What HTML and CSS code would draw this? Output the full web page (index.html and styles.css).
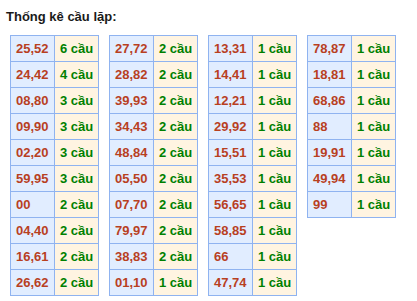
FILE: index.html
```html
<!DOCTYPE html>
<html>
<head>
    <meta charset="utf-8">
    <title>Thống kê cầu lặp</title>
    <link rel="stylesheet" href="styles.css">
</head>
<body>
    <h3 class="title">Thống kê cầu lặp:</h3>
    <div class="tables">
        <table class="cau">
            <tr><td class="so">25,52</td><td class="dem">6 cầu</td></tr>
            <tr><td class="so">24,42</td><td class="dem">4 cầu</td></tr>
            <tr><td class="so">08,80</td><td class="dem">3 cầu</td></tr>
            <tr><td class="so">09,90</td><td class="dem">3 cầu</td></tr>
            <tr><td class="so">02,20</td><td class="dem">3 cầu</td></tr>
            <tr><td class="so">59,95</td><td class="dem">3 cầu</td></tr>
            <tr><td class="so">00</td><td class="dem">2 cầu</td></tr>
            <tr><td class="so">04,40</td><td class="dem">2 cầu</td></tr>
            <tr><td class="so">16,61</td><td class="dem">2 cầu</td></tr>
            <tr><td class="so">26,62</td><td class="dem">2 cầu</td></tr>
        </table>
        <table class="cau">
            <tr><td class="so">27,72</td><td class="dem">2 cầu</td></tr>
            <tr><td class="so">28,82</td><td class="dem">2 cầu</td></tr>
            <tr><td class="so">39,93</td><td class="dem">2 cầu</td></tr>
            <tr><td class="so">34,43</td><td class="dem">2 cầu</td></tr>
            <tr><td class="so">48,84</td><td class="dem">2 cầu</td></tr>
            <tr><td class="so">05,50</td><td class="dem">2 cầu</td></tr>
            <tr><td class="so">07,70</td><td class="dem">2 cầu</td></tr>
            <tr><td class="so">79,97</td><td class="dem">2 cầu</td></tr>
            <tr><td class="so">38,83</td><td class="dem">2 cầu</td></tr>
            <tr><td class="so">01,10</td><td class="dem">1 cầu</td></tr>
        </table>
        <table class="cau">
            <tr><td class="so">13,31</td><td class="dem">1 cầu</td></tr>
            <tr><td class="so">14,41</td><td class="dem">1 cầu</td></tr>
            <tr><td class="so">12,21</td><td class="dem">1 cầu</td></tr>
            <tr><td class="so">29,92</td><td class="dem">1 cầu</td></tr>
            <tr><td class="so">15,51</td><td class="dem">1 cầu</td></tr>
            <tr><td class="so">35,53</td><td class="dem">1 cầu</td></tr>
            <tr><td class="so">56,65</td><td class="dem">1 cầu</td></tr>
            <tr><td class="so">58,85</td><td class="dem">1 cầu</td></tr>
            <tr><td class="so">66</td><td class="dem">1 cầu</td></tr>
            <tr><td class="so">47,74</td><td class="dem">1 cầu</td></tr>
        </table>
        <table class="cau">
            <tr><td class="so">78,87</td><td class="dem">1 cầu</td></tr>
            <tr><td class="so">18,81</td><td class="dem">1 cầu</td></tr>
            <tr><td class="so">68,86</td><td class="dem">1 cầu</td></tr>
            <tr><td class="so">88</td><td class="dem">1 cầu</td></tr>
            <tr><td class="so">19,91</td><td class="dem">1 cầu</td></tr>
            <tr><td class="so">49,94</td><td class="dem">1 cầu</td></tr>
            <tr><td class="so">99</td><td class="dem">1 cầu</td></tr>
        </table>
    </div>
</body>
</html>
```
FILE: styles.css
```css
body { margin: 0; background: #fff; font-family: "Liberation Sans", Arial, sans-serif; }
.title { margin: 0; padding: 9px 0 0 6px; font-size: 13px; line-height: 16px; color: #1a1a1a; font-weight: bold; }
.tables { display: flex; align-items: flex-start; gap: 10px; margin: 10px 0 0 10px; }
.cau { border-collapse: separate; border-spacing: 0; border-left: 1px solid #8fb3f0; border-top: 1px solid #8fb3f0; }
.cau td { width: 38px; height: 25px; padding: 0 0 0 5px; line-height: 25px; font-size: 13px; font-weight: bold; border-right: 1px solid #8fb3f0; border-bottom: 1px solid #8fb3f0; white-space: nowrap; }
.so { background: #e1edff; color: #b8401f; }
.dem { background: #fff4e1; color: #008000; }
```
